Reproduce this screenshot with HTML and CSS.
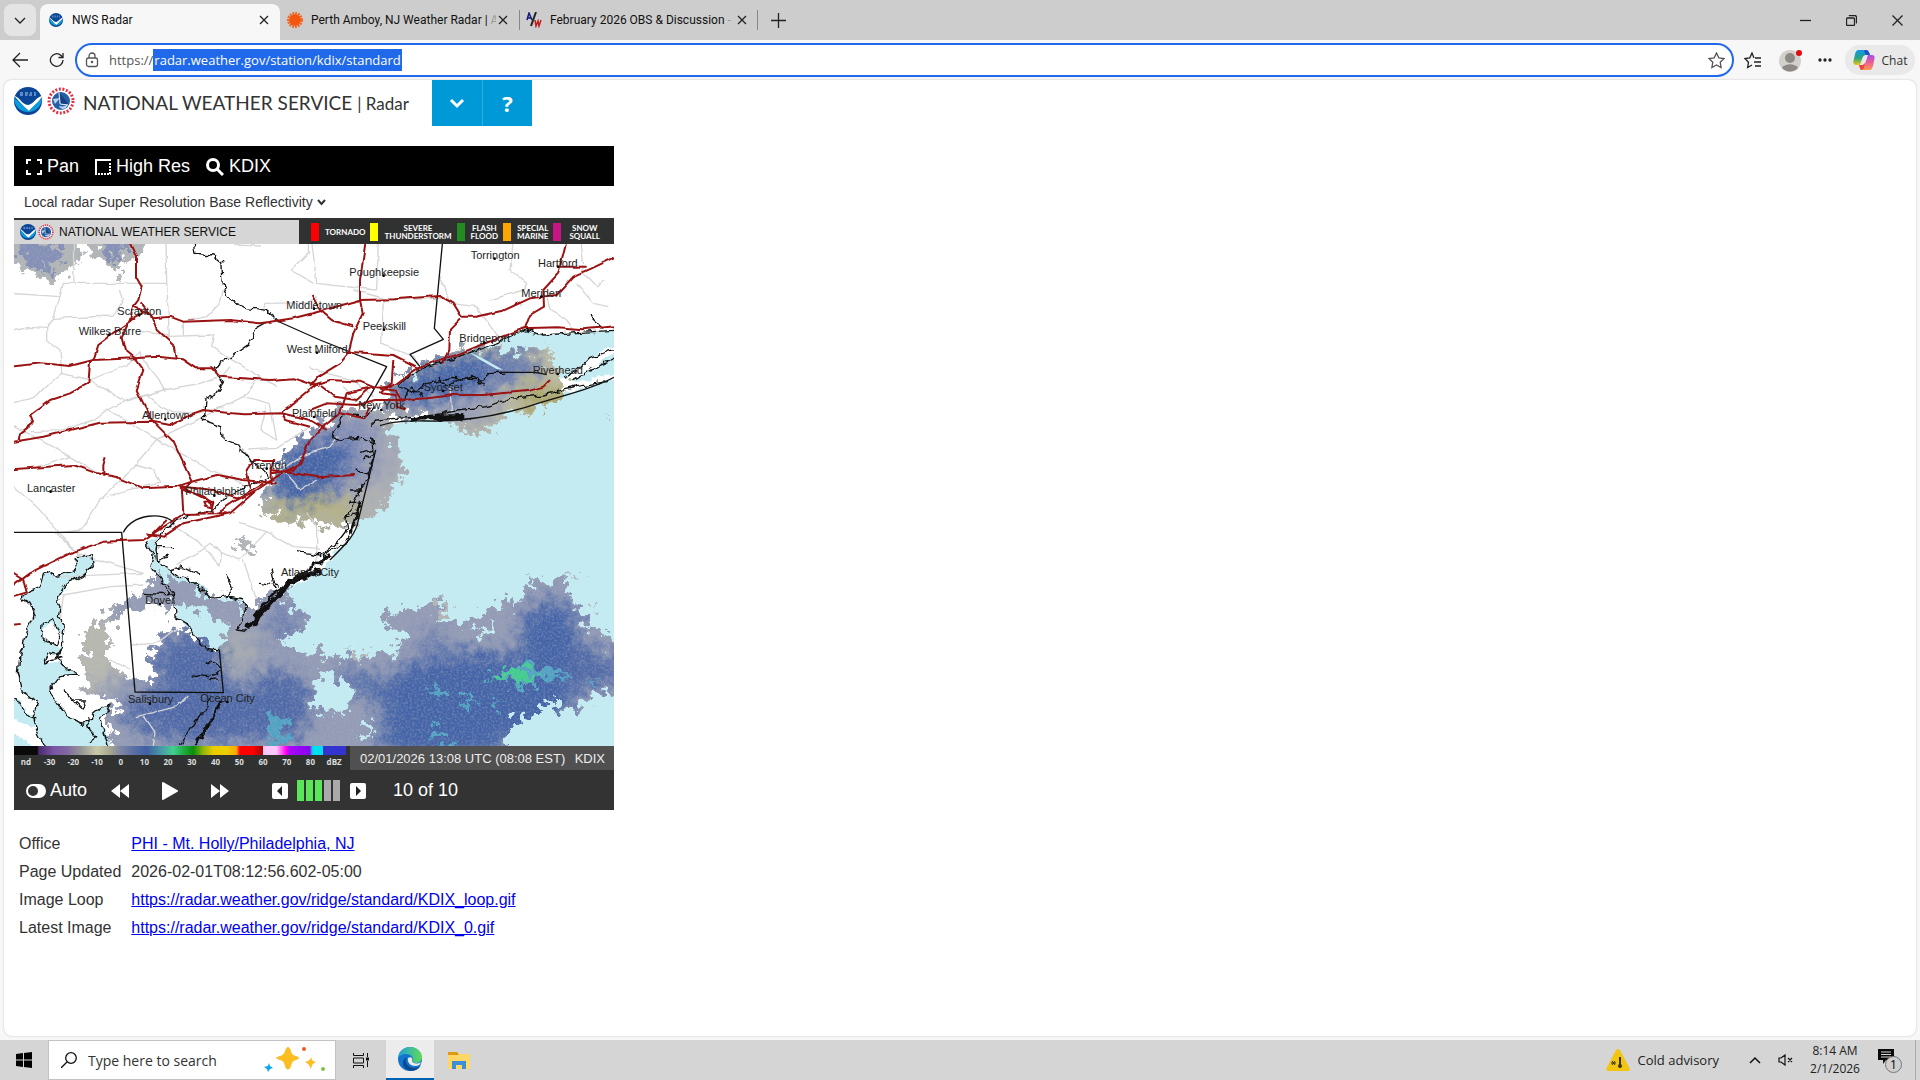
FILE: index.html
```
<!DOCTYPE html>
<html lang="en">

<head>
    <meta charset="UTF-8">
    <meta name="viewport" content="width=device-width, initial-scale=1.0">
    <title>NWS Radar</title>
    <link rel="stylesheet" href="styles.css">
</head>

<body>
    <!-- shared logos -->
    <svg class="defs" width="0" height="0" aria-hidden="true">
        <symbol id="noaa" viewBox="0 0 28 28">
            <circle cx="14" cy="14" r="14" fill="#0b4596"/>
            <path d="M0 11a14 14 0 0 0 28 0c-4 3-7 7-13 13C10 20 5 14 0 11z" fill="#0a9bdc"/>
            <path d="M0 9c5 0 8 9 14 9 5 0 9-9 14-9-1 4-7 8-13 15C9 19 5 14 0 9z" fill="#fff"/>
            <path d="M6 8h3M11 8h2.500M15 8h3M20 8h2M6 6h3M11 6h3M16 6h2M20 6h2" stroke="#b5d0f2" stroke-width="1"/>
        </symbol>
        <symbol id="nws" viewBox="0 0 28 28">
            <circle cx="14" cy="14" r="12" fill="#fff" stroke="#dc3345" stroke-width="3" stroke-dasharray="2 1.600"/>
            <circle cx="14" cy="14" r="9" fill="#235fa5"/>
            <path d="M6 12l7-1-5 6zM12 19c4 1 6 0 9-2l-2 4c-3 2-6 1-7-2z" fill="#b9d1ec"/>
            <path d="M13 6l8 11h-7z" fill="#193f7e"/>
            <path d="M12 6l1 11 8 1" fill="none" stroke="#e4eefa"/>
        </symbol>
    </svg>

    <header class="tabbar">
        <button class="tab-search" aria-label="Search tabs"><svg width="12" height="12" viewBox="0 0 12 12"><path d="M1 4l5 5 5-5"/></svg></button>
        <div class="tab active">
            <svg class="favicon"><use href="#noaa"/></svg>
            <span class="tab-title">NWS Radar</span>
            <button class="tab-close" aria-label="Close tab"><svg width="10" height="10" viewBox="0 0 10 10"><path d="M1 1l8 8M9 1L1 9"/></svg></button>
        </div>
        <div class="tab">
            <svg class="favicon" viewBox="0 0 16 16"><circle cx="8" cy="8" r="7" fill="none" stroke="#f2671f" stroke-width="2" stroke-dasharray="2 1"/><circle cx="8" cy="8" r="6" fill="#f2560f"/></svg>
            <span class="tab-title">Perth Amboy, NJ Weather Radar | <span class="fade">A</span></span>
            <button class="tab-close" aria-label="Close tab"><svg width="10" height="10" viewBox="0 0 10 10"><path d="M1 1l8 8M9 1L1 9"/></svg></button>
        </div>
        <div class="tab divided">
            <svg class="favicon" viewBox="0 0 16 16"><path d="M1 8L3 1l3 7M2 6h3" fill="none" stroke="#17177e" stroke-width="1.500"/><path d="M10 0L5 14" stroke="#222" stroke-width="2"/><path d="M9 8l1 6 2-5 1 5 2-6" fill="none" stroke="#c11c1c" stroke-width="1.500"/></svg>
            <span class="tab-title">February 2026 OBS &amp; Discussion <span class="fade">-</span></span>
            <button class="tab-close" aria-label="Close tab"><svg width="10" height="10" viewBox="0 0 10 10"><path d="M1 1l8 8M9 1L1 9"/></svg></button>
        </div>
        <button class="new-tab" aria-label="New tab"><svg width="15" height="15" viewBox="0 0 15 15"><path d="M7.500 0v15M0 7.500h15"/></svg></button>
        <div class="window-buttons">
            <button aria-label="Minimize"><svg width="11" height="11" viewBox="0 0 11 11"><path d="M0 5.500h11"/></svg></button>
            <button aria-label="Restore"><svg width="11" height="11" viewBox="0 0 11 11"><path d="M1.500 3h6a1 1 0 0 1 1 1v5.500a1 1 0 0 1-1 1h-6a1 1 0 0 1-1-1V4a1 1 0 0 1 1-1zM3 1c.3-.4.700-.5 1-.5h4.500a2 2 0 0 1 2 2V7c0 .5-.2 1-.5 1"/></svg></button>
            <button aria-label="Close"><svg width="11" height="11" viewBox="0 0 11 11"><path d="M.5.5l10 10M10.500.5l-10 10"/></svg></button>
        </div>
    </header>

    <nav class="toolbar">
        <button aria-label="Back"><svg width="16" height="16" viewBox="0 0 16 16"><path d="M16 8H1M8 1L1 8l7 7"/></svg></button>
        <button aria-label="Refresh"><svg width="16" height="16" viewBox="0 0 16 16"><path d="M14 8a6.300 6.300 0 1 1-2-4.600L14 5.500M14 1v4.500H9.500"/></svg></button>
        <div class="address">
            <svg width="14" height="16" viewBox="0 0 14 16"><rect x="1.500" y="6" width="11" height="8.500" rx="2"/><path d="M4 6V4a3 3 0 0 1 6 0v2"/><circle cx="7" cy="10" r=".6"/></svg>
            <label for="url">https://</label>
            <input id="url" type="text" value="radar.weather.gov/station/kdix/standard">
            <button class="star" aria-label="Add to favorites"><svg width="17" height="17" viewBox="0 0 17 17"><path d="M8.500 1l2.300 4.800 5.200.7-3.800 3.700.9 5.300-4.600-2.500-4.600 2.500.9-5.300L1 6.500l5.200-.7z"/></svg></button>
        </div>
        <button class="favorites" aria-label="Favorites"><svg width="17" height="17" viewBox="0 0 17 17"><path d="M10 6L8 1 5.800 5.800 1 6.500l3.500 3.700-.9 5.300L8 13M11 6h6M10 10h7M11 14h6"/></svg></button>
        <button class="profile" aria-label="Profile"><svg width="24" height="24" viewBox="0 0 24 24"><circle cx="12" cy="13" r="11" fill="#d3d0cc"/><circle cx="12" cy="10" r="5" fill="#8c8986"/><path d="M4 20c3-5 13-5 16 0a11 11 0 0 1-16 0z" fill="#8c8986"/><circle cx="21" cy="5" r="3" fill="#e00b0b"/></svg></button>
        <button class="more" aria-label="More"><svg width="14" height="4" viewBox="0 0 14 4"><circle cx="2" cy="2" r="1"/><circle cx="7" cy="2" r="1"/><circle cx="12" cy="2" r="1"/></svg></button>
        <button class="chat">
            <svg width="22" height="20" viewBox="0 0 22 20">
                <defs>
                    <linearGradient id="cp1" x2="0" y2="1"><stop stop-color="#1197ee"/><stop offset=".55" stop-color="#27a47c"/><stop offset="1" stop-color="#f4c514"/></linearGradient>
                    <linearGradient id="cp2" x2="0" y2="1"><stop stop-color="#a44ce8"/><stop offset=".5" stop-color="#ee5d91"/><stop offset="1" stop-color="#fb9a54"/></linearGradient>
                </defs>
                <path d="M5 0h8c2 0 2 2 3 5h-3c-2 0-3 1-4 4l-2 6H3c-3 0-3-3-2-6l1-5C3 1 4 0 5 0z" fill="url(#cp1)"/>
                <path d="M12 0c3 0 4 1 5 5h-4L11 1z" fill="#1c4fc9"/>
                <path d="M17 20H9c-2 0-2-2-3-5h3c2 0 3-1 4-4l2-6h4c3 0 3 3 2 6l-1 5c-1 3-2 4-3 4z" fill="url(#cp2)"/>
                <path d="M6 15h4l2-2-1 5-2 2c-2 0-2-2-3-5z" fill="#ef463c"/>
            </svg>
            Chat
        </button>
    </nav>

    <main class="page">
        <div class="site-header">
            <svg class="logo"><use href="#noaa"/></svg>
            <svg class="logo"><use href="#nws"/></svg>
            <h1>NATIONAL WEATHER SERVICE <span>| Radar</span></h1>
            <button aria-label="Menu"><svg width="16" height="12" viewBox="0 0 16 12"><path d="M2 3l6 6 6-6" fill="none" stroke="#fff" stroke-width="3"/></svg></button>
            <button aria-label="Help">?</button>
        </div>

        <section class="radar">
            <div class="radar-menu">
                <button><svg width="16" height="16" viewBox="0 0 16 16"><path d="M1 5V1h4M11 1h4v4M15 11v4h-4M5 15H1v-4"/></svg>Pan</button>
                <button><svg width="16" height="16" viewBox="0 0 16 16"><path d="M1 16V1h15"/><path d="M3 15h13M15 4v11" stroke-dasharray="2 1"/></svg>High Res</button>
                <button><svg width="18" height="18" viewBox="0 0 18 18"><circle cx="7" cy="7" r="5.500" stroke-width="3"/><path d="M11 11l6 6" stroke-width="3"/></svg>KDIX</button>
            </div>
            <div class="product">
                <select aria-label="Radar product">
                    <option>Local radar Super Resolution Base Reflectivity</option>
                </select>
                <svg width="9" height="7" viewBox="0 0 9 7"><path d="M1 1l3.500 4L8 1" fill="none" stroke="#333" stroke-width="2"/></svg>
            </div>

            <div class="image-header">
                <div class="brand">
                    <svg><use href="#noaa"/></svg>
                    <svg><use href="#nws"/></svg>
                    NATIONAL WEATHER SERVICE
                </div>
                <ul class="warnings">
                    <li class="tornado">TORNADO</li>
                    <li class="severe">SEVERE<br>THUNDERSTORM</li>
                    <li class="flash">FLASH<br>FLOOD</li>
                    <li class="marine">SPECIAL<br>MARINE</li>
                    <li class="snow">SNOW<br>SQUALL</li>
                </ul>
            </div>

            <svg class="map" viewBox="12 12 1800 1506" role="img" aria-label="KDIX radar image">
                <defs>
                    <filter id="rough" x="-5%" y="-5%" width="110%" height="110%" color-interpolation-filters="sRGB">
                        <feTurbulence type="fractalNoise" baseFrequency="0.04" numOctaves="2" seed="4"/>
                        <feDisplacementMap in="SourceGraphic" scale="24" xChannelSelector="R" yChannelSelector="G"/>
                    </filter>
                    <filter id="wavy" x="-5%" y="-5%" width="110%" height="110%" color-interpolation-filters="sRGB">
                        <feTurbulence type="fractalNoise" baseFrequency="0.025" numOctaves="2" seed="9"/>
                        <feDisplacementMap in="SourceGraphic" scale="12" xChannelSelector="R" yChannelSelector="G"/>
                    </filter>
                    <filter id="echo" x="-5%" y="-5%" width="110%" height="110%" color-interpolation-filters="sRGB">
                        <feTurbulence type="fractalNoise" baseFrequency="0.035" numOctaves="5" seed="7" result="n"/>
                        <feDisplacementMap in="SourceGraphic" in2="n" scale="95" xChannelSelector="R" yChannelSelector="G" result="d"/>
                        <feTurbulence type="fractalNoise" baseFrequency="0.15" numOctaves="2" seed="3"/>
                        <feColorMatrix values="0 0 0 0 .66  0 0 0 0 .68  0 0 0 0 .74  1 0 0 0 -.42"/>
                        <feComposite in2="d" operator="in" result="speck"/>
                        <feMerge><feMergeNode in="d"/><feMergeNode in="speck"/></feMerge>
                    </filter>
                    <filter id="soft" x="-30%" y="-30%" width="160%" height="160%" color-interpolation-filters="sRGB"><feGaussianBlur stdDeviation="26"/></filter>
                    <clipPath id="echo-li"><path d="M1130 470L1140 430 1230 380 1310 340 1370 325 1440 320 1500 342 1580 328 1645 345 1620 370 1655 400 1670 455 1600 510 1540 525 1500 508 1445 570 1390 580 1340 570 1290 530 1200 522 1120 545z"/></clipPath>
                    <clipPath id="echo-nj"><path d="M1110 500L1150 600 1185 690 1145 760 1100 825 1050 850 1000 855 880 850 800 835 755 820 755 750 790 700 850 610 930 550 1000 500z"/></clipPath>
                    <clipPath id="echo-se"><path clip-rule="evenodd" d="M340 1090L450 1010 520 1020 600 1070 680 1080 700 1110 770 1060 830 1040 840 1100 880 1120 890 1160 800 1200 860 1235 1000 1255 1150 1240 1190 1190 1110 1145 1180 1105 1290 1090 1275 1150 1350 1150 1450 1110 1480 1060 1520 1110 1550 1020 1620 1030 1655 1020 1690 1080 1720 1140 1780 1170 1840 1230 1840 1350 1750 1365 1720 1400 1660 1410 1610 1370 1590 1420 1510 1440 1470 1560 320 1560 290 1440 330 1400 230 1340 215 1240 240 1150 300 1110zM340 1115L490 1090 570 1110 640 1140 655 1190 620 1225 540 1180 480 1165 440 1190 425 1240 430 1325 350 1315 300 1265 285 1170zM920 1320L960 1305 1010 1320 1030 1380 1000 1430 930 1420 905 1370zM1060 1440l20-10 0 50-20 20zM1410 1160l40-10-20 30-30 10z"/></clipPath>
                </defs>

                <rect x="12" y="12" width="1800" height="1506" fill="#fff"/>

                <!-- ocean, sound and bays -->
                <g class="water" filter="url(#rough)">
                    <path d="M1110 557L1190 543 1270 542 1400 525 1500 505 1630 468 1750 435 1840 405 1840 1540 560 1540 565 1518 600 1460 640 1370 643 1290 630 1230 590 1225 560 1190 530 1160 500 1130 490 1055 460 1030 420 980 430 940 410 910 445 880 437 925 440 960 470 985 500 1010 540 1020 590 1050 600 1080 640 1075 690 1075 710 1100 700 1130 680 1170 710 1175 760 1120 830 1050 930 995 960 960 1010 900 1040 860 1055 780 1070 720 1090 650 1095 610 1050 595 980 600 965 580 1000 560 1050 545 1085 515z"/>
                    <path d="M1170 420L1230 380 1330 355 1430 320 1540 270 1600 285 1840 270 1840 310 1780 330 1740 355 1700 395 1660 412 1570 398 1440 400 1420 420 1330 415 1260 430 1210 440 1180 465z"/>
                    <path d="M1690 420L1750 385 1790 350 1840 335 1840 390 1760 415 1700 425z"/>
                    <path d="M200 950L245 945 250 980 215 1010 170 1030 165 1050 140 1080 150 1100 145 1130 165 1155 160 1220 140 1250 160 1280 210 1305 150 1310 120 1350 130 1370 170 1430 220 1450 280 1400 300 1395 270 1440 300 1500 310 1540 110 1540 80 1470 70 1430 85 1385 40 1360 25 1300 30 1240 60 1150 75 1120 60 1090 35 1075 60 1050 90 1040 100 1000 120 990 130 1010 165 1000 200 990 195 960z"/>
                    <path d="M-10 1370l42 10 20 40 30 10 0 30-20 0-72-30zM-10 1480l60 20 20 50h-80z"/>
                </g>
                <path d="M95 1170l30-25 30 40-5 40-50-25zM105 1270l10-30 40 10-10 15z" fill="#fff"/>

                <!-- radar echoes -->
                <g filter="url(#echo)">
                    <g fill="#b4b7b8">
                        <path d="M-20 -20h245l-10 70-40 45-35 10-40 20-30-25-45-20-45-20zM240 -20h170l-20 70-50 10-20 50-30-35-40-20z"/>
                        <path d="M20 10l100 0 40 40-50 55-60-40zM260 0h90l-20 60-30 10z" fill="#8490b7"/>
                        <path d="M1210 1135l90-50 20 20-60 60zM1000 1235l80-5-40 20zM680 905l40 10 25 20-20 10-35-15zM1740 1090l15-5 5 20-10 0zM1670 1010l40-8-20 16zM1770 540l40-15-10 10z"/>
                    </g>
                    <g clip-path="url(#echo-li)">
                        <path d="M1000 200h800v500h-800z" fill="#bfbea6"/>
                        <g filter="url(#soft)">
                            <ellipse cx="1330" cy="430" rx="240" ry="80" fill="#8790b5" transform="rotate(-14 1330 430)"/>
                            <ellipse cx="1330" cy="410" rx="190" ry="52" fill="#4464a8" transform="rotate(-14 1330 410)"/>
                            <ellipse cx="1250" cy="440" rx="90" ry="45" fill="#4464a8"/>
                            <ellipse cx="1350" cy="525" rx="130" ry="40" fill="#9da3b5"/>
                            <ellipse cx="1500" cy="370" rx="90" ry="40" fill="#6177ae"/>
                            <ellipse cx="1600" cy="480" rx="70" ry="40" fill="#aba55d"/>
                        </g>
                    </g>
                    <g clip-path="url(#echo-nj)">
                        <path d="M700 400h600v500h-600z" fill="#b0b2b2"/>
                        <g filter="url(#soft)">
                            <ellipse cx="950" cy="660" rx="190" ry="120" fill="#8690b6" transform="rotate(-30 950 660)"/>
                            <ellipse cx="900" cy="690" rx="130" ry="75" fill="#4464a8" transform="rotate(-30 900 690)"/>
                            <ellipse cx="850" cy="725" rx="60" ry="50" fill="#4464a8"/>
                            <ellipse cx="950" cy="805" rx="90" ry="35" fill="#b9b375"/>
                            <ellipse cx="810" cy="825" rx="60" ry="25" fill="#b9b375"/>
                            <ellipse cx="1120" cy="650" rx="40" ry="90" fill="#9fa5b8"/>
                        </g>
                    </g>
                    <g clip-path="url(#echo-se)">
                        <path d="M150 950h1700v620h-1700z" fill="#949cb6"/>
                        <g filter="url(#soft)">
                            <ellipse cx="260" cy="1230" rx="80" ry="120" fill="#b9baaf"/>
                            <ellipse cx="540" cy="1270" rx="110" ry="90" fill="#4f69a8"/>
                            <ellipse cx="600" cy="1420" rx="260" ry="90" fill="#4f69a8"/>
                            <ellipse cx="810" cy="1400" rx="90" ry="110" fill="#4f69a8"/>
                            <ellipse cx="820" cy="1150" rx="40" ry="50" fill="#6579ae"/>
                            <ellipse cx="680" cy="1230" rx="50" ry="60" fill="#a9adb0"/>
                            <ellipse cx="1400" cy="1370" rx="290" ry="135" fill="#4464a8"/>
                            <ellipse cx="1300" cy="1480" rx="200" ry="80" fill="#4464a8"/>
                            <ellipse cx="1620" cy="1200" rx="90" ry="120" fill="#4464a8"/>
                            <ellipse cx="1740" cy="1290" rx="90" ry="60" fill="#4f69a8"/>
                            <ellipse cx="1090" cy="1350" rx="120" ry="26" fill="#4464a8" transform="rotate(32 1090 1350)"/>
                            <ellipse cx="1270" cy="1220" rx="45" ry="45" fill="#6f80af"/>
                        </g>
                    </g>
                    <path d="M1430 1300l60-15 90-10 60 15 60 25-80 10-80 10-70-10zM1255 1350l40-10 15 30-20 10zM1350 1380l50 0-10 30-30-5zM1430 1385l70 0-40 10zM1270 1450l30 20 30 40-60-10zM1730 1325l50-8-15 15zM775 1420l25 0 30 60-20 38-30 0z" fill="#4fa3c4"/>
                    <path d="M1445 1300l55-12 70 5 20 20-50 12-80-10z" fill="#3fd08e"/>
                </g>
                <path d="M1375 335l35 15 70 40-20-3-50-28z" fill="#c4ebf1"/>

                <!-- county lines -->
                <g class="county" filter="url(#wavy)">
                    <path d="M0 160L150 170 160 130 470 130 468 0M190 0L192 130M150 170L130 235 110 265 110 300 150 330 155 400 120 430 80 470 0 492M130 235L310 228 340 180 330 150M0 275L60 262 110 265M155 400L240 420 345 485 460 450 570 430 640 405 660 380M240 420L350 375 390 335 400 360 440 410 465 455M470 130L478 285 390 275M450 290L610 285 605 318 650 350 750 410 800 440M520 285L520 245 590 230 630 190 640 150M760 215L765 190 890 188 920 170M895 0L895 40 845 90 910 130M670 12L750 15"/>
                    <path d="M62 575L150 572 250 540 290 510 365 475 410 465 450 500 490 515 560 520 640 500M0 550L180 650 280 710M180 650L80 680M295 510L440 598 600 690 700 730M440 598L375 675 430 690 450 730M440 598L600 520 700 470 780 490 800 600 750 570 770 500M700 470L750 410M715 630L800 625 900 560"/>
                    <path d="M450 730L350 750 270 780 215 870 135 880M0 730L80 800 210 950M270 780L380 675M140 880L200 940 400 1000 130 1010M480 850L560 900 630 978 635 935 600 910 560 940 500 970M635 935L690 960 770 875 850 920 930 925M690 850L770 875M890 820L920 860 920 950 910 1000M700 960L740 1080M150 1150L160 1065 300 1040 400 1035M365 1215L435 1210 500 1165M400 1430L435 1480 430 1518M380 1430L500 1400 530 1370 535 1365M300 1260L360 1290"/>
                    <path d="M905 0L920 130 1100 150 1105 0M1030 150L1140 180 1300 175M1120 180L1115 310 1210 350 1230 380M1290 110L1320 190 1400 200 1470 300 1475 330M1440 180L1540 150 1550 130 1500 90 1510 0M1610 170L1620 210 1670 240 1700 280M1710 0L1720 100 1760 140 1780 120M1700 130L1750 190 1795 200M900 380L950 400 1030 420 1090 470M1000 440L1040 480M1320 440L1325 520M800 700L870 650 960 620 985 590M830 700L870 750 920 720"/>
                </g>

                <!-- state borders and coast -->
                <g class="border" filter="url(#rough)">
                    <path d="M548 0L555 40 610 45 635 65 640 140 660 180 710 205 770 215 800 240M740 260L720 310 670 345 610 388 640 430 620 460 585 480 580 540 635 560 640 600 690 620 720 660 780 710 700 745 640 780 600 815 520 830 490 845 450 885"/>
                </g>
                <g class="border">
                    <path d="M740 262L770 246M795 240L930 300 1130 380 1085 460 1060 500M1297 12L1273 265 1300 298 1200 343 1230 380"/>
                    <path d="M12 877H335L375 1356 640 1358 628 1230M340 877C370 820 460 815 492 848"/>
                </g>
                <g class="coast" filter="url(#rough)">
                    <path d="M1165 435L1190 410 1250 380 1330 355 1430 320 1540 270 1600 285 1700 278 1830 270M1165 435L1210 460 1250 430 1330 415 1420 420 1440 400 1480 400M1660 412L1700 395 1740 355 1830 322M1690 420L1750 385 1830 350M1180 480L1200 440 1240 470M1290 410L1300 440 1350 420 1400 410 1420 440"/>
                    <path d="M1080 560L1100 540 1150 535 1270 530 1340 510 1430 500 1500 475 1600 465 1700 440 1790 425M1200 535H1320M1220 540L1380 535M1740 225l40 40"/>
                    <path d="M1000 520L980 560 965 580 980 600 1050 595 1095 612 1085 590 1090 650 1070 720 1040 770M1030 525L1070 530 1090 500M1055 735L1035 790 1005 840 1010 870 980 910 930 950M1050 640l40-10M1060 660l30-20M1040 690l35 10M1020 750l40 0M1015 790l30 0M1010 830l30-10M1020 870l-20 40-50 30-20 30"/>
                    <path d="M450 885L435 930 440 960 475 985 500 1010 540 1020 600 1075 650 1070 700 1080 710 1100 680 1170 712 1175M410 910L430 945 420 980 460 1030 490 1055 495 1130 530 1150 560 1200 590 1225 628 1230M440 920L495 920M440 960L480 945M480 990L520 980 570 1005M650 1005L670 1040 650 1075M780 985L790 1030 810 1035M750 1030L800 1040M860 935L900 940 930 945M400 1060L490 1065M460 1040L490 1070M545 1305L600 1310 640 1290M590 1265L635 1280M600 1320L635 1315M600 1370L590 1400 540 1470 510 1518"/>
                    <path d="M200 950L245 945 250 980 215 1010 170 1030 140 1080 150 1100 145 1130 165 1155 160 1220 140 1250 160 1280 210 1305 150 1310 120 1350 130 1370 170 1430 220 1450 280 1400 300 1395 270 1440 300 1530M110 1530L80 1470 70 1430 85 1385 40 1360 25 1300 30 1240 60 1150 75 1120 60 1090 35 1075 60 1050 90 1040 100 1000 120 990 130 1010 165 1000 200 990 195 955M0 1370l32 20 20 40 30 10M100 1150l30-15 20 50-10 30-45-20zM105 1270l10-30 40 10zM160 1350l30 30 40 0-10 30zM230 1430l10 40 20 20-20 15"/>
                </g>
                <g class="barrier" filter="url(#rough)">
                    <path d="M1200 540L1260 530 1360 528" stroke-width="12"/>
                    <path d="M712 1168L760 1115 830 1040 880 1010 930 990" stroke-width="15"/>
                    <path d="M735 1130L790 1060 860 1010 930 965 960 945" stroke-width="8"/>
                    <path d="M1020 880L1055 780" stroke-width="8"/>
                    <path d="M560 1510L600 1450 635 1380" stroke-width="8"/>
                </g>
                <g class="border">
                    <path d="M1110 557C1180 535 1250 545 1290 543 1400 540 1500 520 1600 485 1680 462 1760 440 1812 412M1470 397H1575L1610 404M960 960C1010 910 1040 880 1045 840 1060 780 1080 700 1097 630"/>
                </g>

                <!-- interstates -->
                <g class="road" filter="url(#wavy)">
                    <path d="M355 0L378 50 378 110 395 140 385 180 370 200 420 220 440 270 495 320 500 355M395 190L430 235 480 230 520 245 660 240 750 250 850 235 925 215 1050 180 1150 178 1290 168 1330 190 1355 230 1400 230 1480 212 1560 175 1640 165 1690 110 1745 85 1830 45M370 195L360 240 400 215M360 240L335 290 345 330 375 355 400 390 380 450 400 490 430 545 490 605 545 725M375 235L325 270 265 315 250 360 240 370 235 430 180 460 120 480 60 525 70 550 30 580 25 605"/>
                    <path d="M0 380L95 370 180 378 250 360 375 355 440 350 520 358 560 385 605 385 630 410 780 420 850 415 900 432 925 435M0 607L100 590 270 548 430 545 480 555 550 520 580 510 620 515 700 523 815 520 900 540 950 570M0 688L190 675 260 700 320 712 400 745 500 740 545 725 620 705 700 720 800 730M280 710V675L287 652M545 725L520 750 580 770 600 790M500 738L610 750 680 775 760 730"/>
                    <path d="M0 1045L60 1000 190 935 280 905 400 900 520 822 620 820 680 780 740 750 800 710 870 670 900 600 940 560 990 520 1010 460 1075 445 1140 440 1160 430 1230 380 1350 340 1450 300 1540 265 1640 262 1720 268 1830 258M410 880L460 890 520 850 660 820 740 750M520 820L515 740 600 785 610 820 650 820M470 840L430 880M580 788L610 785 605 805 585 800zM0 995L40 1020 50 1060 0 1075M0 1155l32-3M785 680L785 735M720 745L710 690 730 660 790 660 785 690 925 712 1035 705M785 700L850 690 880 650"/>
                    <path d="M1068 0L1050 120 1050 180 1058 220 1030 280 1015 340 990 370 925 410 900 440M905 165L930 210 965 240 1030 260M1015 335L1150 345 1230 385M1350 235L1320 265 1318 330 1300 370M1670 0L1650 80 1645 100 1600 150 1602 200 1560 225 1545 265M1650 80L1730 80M900 437L960 420 1050 425 1100 445 1160 452 1180 485M1150 360L1145 430 1110 460 1160 465 1160 500 1190 510M900 510L950 490 1040 495 1095 480 1170 480 1250 475 1330 465 1420 465 1560 452 1600 440 1620 420M930 435L975 470 1040 480 1080 445M925 430L850 490 815 515 825 540 900 560M990 520L1060 535 1080 500"/>
                </g>

                <g class="city">
                    <text x="322" y="225">Scranton</text>
                    <text x="206" y="284">Wilkes Barre</text>
                    <text x="396" y="537">Allentown</text>
                    <text x="51" y="755">Lancaster</text>
                    <text x="526" y="766">Philadelphia</text>
                    <text x="718" y="686">Trenton</text>
                    <text x="846" y="530">Plainfield</text>
                    <text x="830" y="338">West Milford</text>
                    <text x="829" y="206">Middletown</text>
                    <text x="1018" y="108">Poughkeepsie</text>
                    <text x="1382" y="56">Torrington</text>
                    <text x="1584" y="80">Hartford</text>
                    <text x="1534" y="170">Meriden</text>
                    <text x="1058" y="269">Peekskill</text>
                    <text x="1348" y="307">Bridgeport</text>
                    <text x="1568" y="401">Riverhead</text>
                    <text x="1241" y="452">Syosset</text>
                    <text x="1045" y="508">New York</text>
                    <text x="813" y="1007">Atlantic City</text>
                    <text x="406" y="1091">Dover</text>
                    <text x="354" y="1390">Salisbury</text>
                    <text x="571" y="1386">Ocean City</text>
                    <path d="M388 226h0M298 284h0M466 538h0M122 755h0M613 767h0M770 686h0M912 531h0M921 338h0M912 206h0M1121 107h0M1454 56h0M1644 80h0M1594 170h0M1122 269h0M1423 308h0M1643 402h0M1299 453h0M1114 510h0M895 1007h0M450 1092h0M420 1391h0M652 1386h0"/>
                </g>
            </svg>

            <div class="image-footer">
                <div class="scale">
                    <div class="scale-colors"></div>
                    <ol>
                        <li>nd</li><li>-30</li><li>-20</li><li>-10</li><li>0</li><li>10</li><li>20</li><li>30</li><li>40</li><li>50</li><li>60</li><li>70</li><li>80</li><li>dBZ</li>
                    </ol>
                </div>
                <div class="stamp"><span>02/01/2026 13:08 UTC (08:08 EST)</span><span>KDIX</span></div>
            </div>

            <div class="controls">
                <button class="auto"><svg width="20" height="14" viewBox="0 0 20 14"><rect width="20" height="14" rx="7"/><circle cx="7" cy="7" r="5" fill="#333"/></svg>Auto</button>
                <button class="rewind" aria-label="Rewind"><svg width="18" height="14" viewBox="0 0 18 14"><path d="M9 0v14L0 7zM18 0v14L9 7z"/></svg></button>
                <button class="play" aria-label="Play"><svg width="16" height="18" viewBox="0 0 16 18"><path d="M1 1l14 8-14 8z" stroke="#fff" stroke-width="2" stroke-linejoin="round"/></svg></button>
                <button class="forward" aria-label="Fast forward"><svg width="18" height="14" viewBox="0 0 18 14"><path d="M0 0v14l9-7zM9 0v14l9-7z"/></svg></button>
                <button class="step" aria-label="Slower"><svg width="16" height="16" viewBox="0 0 16 16"><rect width="16" height="16" rx="2"/><path d="M10 3v10L5 8z" fill="#222"/></svg></button>
                <div class="speed"><i class="on"></i><i class="on"></i><i class="on"></i><i></i><i></i></div>
                <button class="step" aria-label="Faster"><svg width="16" height="16" viewBox="0 0 16 16"><rect width="16" height="16" rx="2"/><path d="M6 3v10l5-5z" fill="#222"/></svg></button>
                <span class="frame">10 of 10</span>
            </div>
        </section>

        <table class="info">
            <tr><th scope="row">Office</th><td><a href="#">PHI - Mt. Holly/Philadelphia, NJ</a></td></tr>
            <tr><th scope="row">Page Updated</th><td>2026-02-01T08:12:56.602-05:00</td></tr>
            <tr><th scope="row">Image Loop</th><td><a href="#">https://radar.weather.gov/ridge/standard/KDIX_loop.gif</a></td></tr>
            <tr><th scope="row">Latest Image</th><td><a href="#">https://radar.weather.gov/ridge/standard/KDIX_0.gif</a></td></tr>
        </table>
    </main>

    <footer class="taskbar">
        <button class="start" aria-label="Start"><svg width="16" height="16" viewBox="0 0 16 16"><path d="M0 2l7-1v6.500H0zM8 1l8-1v7.500H8zM0 8.500h7V15l-7-1zM8 8.500h8V16l-8-1z"/></svg></button>
        <div class="search">
            <svg width="16" height="16" viewBox="0 0 16 16"><circle cx="10" cy="6" r="5.300" fill="none" stroke="#111" stroke-width="1.300"/><path d="M6 10l-6 6" stroke="#111" stroke-width="1.300"/></svg>
            <input type="text" placeholder="Type here to search" aria-label="Type here to search">
            <svg width="62" height="26" viewBox="0 0 62 26">
                <path d="M24 0c1 0 2 1 3 4 1 4 2 4 5 5 4 1 4 3 0 4-3 1-4 2-5 6s-5 5-6 0c-1-4-2-5-5-6-5-1-5-3 0-4 3-1 4-2 5-5 1-3 2-4 3-4z" fill="#fbbd22"/>
                <path d="M47 10c1 3 1 4 5 5-4 2-4 3-5 7-2-4-2-5-6-7 4-1 5-2 6-5z" fill="#fbbd22"/>
                <path d="M5 16l1 3 3 2-3 1-2 3-1-3-3-2 4-1z" fill="#0aa5f0"/>
                <circle cx="40" cy="2" r="2" fill="#f15b2a"/><circle cx="59" cy="22" r="2" fill="#7fc242"/>
            </svg>
        </div>
        <button class="app" aria-label="Task view"><svg width="16" height="16" viewBox="0 0 16 16" fill="none" stroke="#111"><path d="M.5 1v2.500h10V1M.5 6h10v5H.5zM.5 16v-2.500h10V16M14.500 1v4M14.500 9v6"/><path d="M13 7h3" stroke-width="3"/></svg></button>
        <button class="app running" aria-label="Edge">
            <svg width="24" height="24" viewBox="0 0 24 24">
                <defs><linearGradient id="edge1"><stop stop-color="#1f9fe0"/><stop offset="1" stop-color="#5fda55"/></linearGradient></defs>
                <circle cx="12" cy="12" r="12" fill="#1374cf"/>
                <path d="M0 11C1 4 6 0 12 0c7 0 12 5 12 10 0 4-3 6-6 6-2 0-4-1-4-2 1-1 2-4-2-6C8 6 3 7 0 11z" fill="url(#edge1)"/>
                <path d="M9 10c-3 4 0 11 7 11 3 0 5-1 7-3-3 7-13 8-17 2-2-4-1-8 3-10z" fill="#0c4a8f"/>
                <path d="M10 11c3-2 5 0 4 3 0 2 5 4 9 1-1 3-3 4-6 4-5 0-8-4-7-8z" fill="#ececec"/>
            </svg>
        </button>
        <button class="app" aria-label="File Explorer"><svg width="22" height="19" viewBox="0 0 22 19"><path d="M0 1h9l2 2h11v15H0z" fill="#ffd766"/><path d="M0 1h9l2 3H0z" fill="#dc9a12"/><path d="M4 18v-8h14v8h-4v-4H8v4z" fill="#3a8fd6"/></svg></button>

        <button class="weather"><svg width="24" height="22" viewBox="0 0 24 22"><path d="M12 0c1 0 2 1 3 3l9 17c0 1-1 2-2 2H2c-1 0-2-1-2-2L9 3c1-2 2-3 3-3z" fill="#f2c511"/><path d="M14 8v8" stroke="#3b3210" stroke-width="2"/><path d="M5 14h5M6 12l3 4M9 12l-3 4" stroke="#3b3210"/><circle cx="14" cy="17" r="2" fill="#3b3210"/></svg>Cold advisory</button>
        <button class="tray" aria-label="Show hidden icons"><svg width="12" height="8" viewBox="0 0 12 8"><path d="M1 7l5-5 5 5" fill="none" stroke="#111" stroke-width="1.500"/></svg></button>
        <button class="tray" aria-label="Volume"><svg width="15" height="12" viewBox="0 0 15 12"><path d="M1 4h2l4-3v10L3 8H1zM10 4l4 4M14 4l-4 4" fill="none" stroke="#111" stroke-width="1.200"/></svg></button>
        <div class="clock"><time>8:14 AM</time><time>2/1/2026</time></div>
        <button class="notify" aria-label="Notifications"><svg width="24" height="26" viewBox="0 0 24 26"><path d="M0 2h16v11H8l-3 4v-4H0z" fill="#0a0a0a"/><path d="M3 5h10M3 7.500h10M3 10h10" stroke="#d5d5d5"/><circle cx="15.500" cy="17.500" r="8" fill="#cfcfcf" stroke="#777"/><text x="12" y="22">1</text></svg></button>
        <span class="show-desktop"></span>
    </footer>
</body>

</html>
```

FILE: styles.css
```
* {
    box-sizing: border-box;
}

body {
    margin: 0;
    min-height: 100vh;
    display: flex;
    flex-direction: column;
    background-color: #f7f7f7;
    font-family: "Liberation Sans", Arial, sans-serif;
    color: #333;
}

button {
    display: flex;
    align-items: center;
    justify-content: center;
    flex: none;
    margin: 0;
    padding: 0;
    border: none;
    background: none;
    color: inherit;
    font: inherit;
    cursor: pointer;
}

svg {
    display: block;
    flex: none;
}

.defs {
    position: absolute;
}

/* browser tabs */

.tabbar {
    display: flex;
    align-items: center;
    height: 40px;
    padding-left: 4px;
    background-color: #cdcdcd;
    font-family: Roboto, "Segoe UI", sans-serif;
    font-size: 12px;
    color: #111;
}

.tabbar button svg,
.toolbar button svg,
.address svg {
    fill: none;
    stroke: #222;
    stroke-width: 1.3;
}

.tab-search {
    width: 32px;
    height: 32px;
    margin-right: 4px;
    border-radius: 8px;
    background-color: #e4e4e4;
}

.tab {
    display: flex;
    align-items: center;
    width: 239px;
    height: 36px;
    padding: 0 11px 0 7px;
}

.tab.active {
    width: 240px;
    align-self: flex-end;
    padding-bottom: 4px;
    border-radius: 8px 8px 0 0;
    background-color: #f7f7f7;
}

.tab.divided {
    background: linear-gradient(#888, #888) left / 1px 20px no-repeat, linear-gradient(#888, #888) right / 1px 20px no-repeat;
}

.favicon {
    width: 16px;
    height: 16px;
    margin-right: 8px;
}

.active .favicon {
    width: 14px;
    height: 14px;
    margin: 0 9px 0 2px;
}

.tab-title {
    flex: 1;
    overflow: hidden;
    white-space: nowrap;
}

.fade {
    color: #999;
}

.tab-close {
    width: 10px;
    margin-left: 2px;
}

.new-tab {
    width: 40px;
    height: 32px;
}

.window-buttons {
    display: flex;
    margin-left: auto;
}

.window-buttons button {
    width: 46px;
    height: 40px;
}

/* address bar */

.toolbar {
    display: flex;
    align-items: center;
    height: 40px;
    padding: 0 5px 0 1px;
    background-color: #f7f7f7;
    font-family: "Open Sans", "Segoe UI", sans-serif;
    font-size: 13px;
}

.toolbar > button {
    width: 37px;
    height: 30px;
}

.toolbar .address {
    display: flex;
    flex: 1;
    align-items: center;
    height: 34px;
    padding: 0 7px 0 8px;
    border: 2px solid #2169eb;
    border-radius: 17px;
    background-color: #fff;
}

.toolbar .address svg {
    stroke: #555;
}

.address label {
    margin-left: 10px;
    color: #555;
}

.address input {
    field-sizing: content;
    height: 22px;
    padding: 0 1px;
    border: none;
    background-color: #2169eb;
    color: #fff;
    font: inherit;
}

.address .star {
    margin-left: auto;
}

.toolbar .more svg {
    fill: #222;
}

.toolbar .profile svg,
.toolbar .chat svg {
    stroke: none;
}

.toolbar .more {
    width: 34px;
}

.toolbar .chat {
    gap: 7px;
    width: 70px;
    margin-left: 3px;
    border-radius: 15px;
    background-color: #e9e9e9;
    font-size: 12px;
}

/* page */

.page {
    flex: 1;
    margin: 0 4px 4px;
    padding: 0 10px;
    border-radius: 8px;
    background-color: #fff;
    box-shadow: 0 0 2px #bbb;
}

.site-header {
    display: flex;
    align-items: center;
    height: 46px;
    margin-bottom: 20px;
}

.logo {
    width: 28px;
    height: 28px;
    margin: 0 5px 4px 0;
}

.site-header h1 {
    margin: 0 23px 2px 3px;
    font-family: Lato, "Open Sans", sans-serif;
    font-size: 19px;
    font-weight: 400;
}

.site-header h1 span {
    font-size: 17px;
}

.site-header button {
    width: 50px;
    height: 46px;
    background-color: #0099d8;
    color: #fff;
    font-family: "Open Sans", sans-serif;
    font-size: 22px;
    font-weight: 700;
}

.site-header button + button {
    border-left: 1px solid #33ade0;
}

.radar {
    width: 600px;
    max-width: 100%;
}

.radar-menu {
    display: flex;
    align-items: center;
    gap: 16px;
    height: 40px;
    padding: 1px 0 0 12px;
    background-color: #000;
    color: #fff;
    font-size: 18px;
}

.radar-menu button {
    gap: 5px;
}

.radar-menu svg {
    fill: none;
    stroke: #fff;
    stroke-width: 2;
}

.product {
    display: flex;
    align-items: center;
    gap: 4px;
    height: 32px;
    padding-left: 10px;
}

.product select {
    appearance: none;
    padding: 0;
    border: none;
    background: none;
    color: #333;
    font: 14px "Liberation Sans", Arial, sans-serif;
}

.image-header {
    display: flex;
    height: 26px;
    border-top: 2px solid #333;
    background-color: #303232;
}

.brand {
    display: flex;
    align-items: center;
    gap: 2px;
    width: 285px;
    padding-left: 6px;
    background-color: #d6d6d6;
    color: #111;
    font-size: 12px;
}

.brand svg {
    width: 16px;
    height: 16px;
}

.brand svg + svg {
    margin-right: 3px;
}

.warnings {
    display: flex;
    flex: 1;
    justify-content: space-between;
    align-items: center;
    margin: 0;
    padding: 0 14px 0 12px;
    list-style: none;
    color: #fff;
    font: 700 8px/8px Lato, sans-serif;
    text-align: center;
}

.warnings li {
    display: grid;
    align-content: center;
    min-height: 18px;
    border-left: 8px solid #f00;
}

.warnings .tornado { padding-left: 6px; }
.warnings .severe { padding-left: 6px; border-color: #ff0; }
.warnings .flash { padding-left: 6px; border-color: #228b22; }
.warnings .marine { padding-left: 6px; border-color: #ffa500; }
.warnings .snow { padding-left: 8px; border-color: #c71585; }

/* map */

.map {
    width: 100%;
}

.water {
    fill: #c4ebf1;
}

.county,
.border,
.coast,
.barrier,
.road {
    fill: none;
    stroke-linejoin: round;
}

.county {
    stroke: #d6d6d6;
    stroke-width: 4;
}

.border {
    stroke: #111;
    stroke-width: 4;
}

.coast {
    stroke: #111;
    stroke-width: 4;
}

.barrier {
    stroke: #111;
}

.road {
    stroke: #9a1212;
    stroke-width: 6;
}

.city {
    fill: #222;
    font-size: 33px;
}

.city path {
    stroke: #000;
    stroke-width: 8;
    stroke-linecap: round;
}

.image-footer {
    display: flex;
    height: 24px;
    background-color: #303232;
}

.scale {
    width: 336px;
    padding-right: 4px;
}

.scale-colors {
    height: 9px;
    background: linear-gradient(90deg, #0a0a0a 7%, #4a2b6e 7.500%, #7a55a5 12%, #8069a0 16%, #949494 20%, #c9c9a9 25%, #a5a58d 29%, #8087a3 32%, #5a70a5 36%, #3f60a3 40%, #4895a8 44%, #44cf90 48%, #1fae45 51%, #0a8d0a 54%, #8fb50c 57%, #ebcc00 60%, #ecd000 64%, #f9a704 67%, #f00 68%, #f00 72%, #9c0808 75%, #fcc7fb 75%, #fcc7fb 79%, #f0e 82%, #a608f7 83%, #8803f0 89%, #00dfed 90%, #00dfed 93%, #3333cf 93%);
}

.scale ol {
    display: grid;
    grid-template-columns: repeat(14, 1fr);
    margin: 0;
    padding: 0;
    list-style: none;
    color: #ddd;
    font: 700 8px/14px "Open Sans", sans-serif;
    text-align: center;
}

.stamp {
    display: flex;
    flex: 1;
    justify-content: space-between;
    padding: 0 9px 0 10px;
    background-color: #505050;
    color: #eee;
    font-size: 13px;
    line-height: 25px;
}

.controls {
    display: flex;
    align-items: center;
    height: 40px;
    padding: 1px 0 0 12px;
    background-color: #333;
    color: #fff;
    font-size: 18px;
}

.controls svg {
    fill: #fff;
}

.auto {
    gap: 4px;
}

.rewind {
    margin-left: 24px;
}

.play {
    margin-left: 33px;
}

.forward {
    margin: 0 43px 0 33px;
}

.speed {
    display: flex;
    gap: 2px;
    margin: 0 10px 0 9px;
}

.speed i {
    width: 7px;
    height: 21px;
    background-color: #aaa;
}

.speed .on {
    background-color: #5be55b;
}

.frame {
    margin-left: 27px;
}

.info {
    margin-top: 19px;
    border-spacing: 2px;
    font-size: 16px;
    line-height: 24px;
}

.info th,
.info td {
    padding: 1px 5px 1px 3px;
    font-weight: 400;
    text-align: left;
}

.info a {
    color: #00e;
}

/* taskbar */

.taskbar {
    display: flex;
    align-items: center;
    height: 40px;
    background-color: #d5d5d5;
    color: #222;
    font-family: "Open Sans", "Segoe UI", sans-serif;
    font-size: 12px;
}

.taskbar .start {
    width: 48px;
    height: 40px;
}

.search {
    display: flex;
    align-items: center;
    width: 288px;
    height: 40px;
    padding: 0 9px 0 12px;
    border: 1px solid #c2c2c2;
    background-color: #fff;
}

.search input {
    flex: 1;
    min-width: 0;
    padding: 0 0 0 11px;
    border: none;
    font: 14px "Open Sans", "Segoe UI", sans-serif;
}

.search input::placeholder {
    color: #333;
}

.app {
    width: 48px;
    height: 40px;
    margin-left: 1px;
}

.app.running {
    border-bottom: 2px solid #0063b1;
    background-color: #ececec;
}

.weather {
    gap: 8px;
    margin-left: auto;
    margin-right: 20px;
    font-size: 13px;
}

.tray {
    width: 31px;
    height: 40px;
}

.clock {
    display: flex;
    flex-direction: column;
    width: 64px;
    margin: 0 11px 0 2px;
    line-height: 18px;
    text-align: center;
}

.notify {
    width: 24px;
    margin-right: 13px;
}

.notify text {
    font-size: 12px;
}

.show-desktop {
    width: 5px;
    height: 40px;
    border-left: 1px solid #aaa;
}
```
